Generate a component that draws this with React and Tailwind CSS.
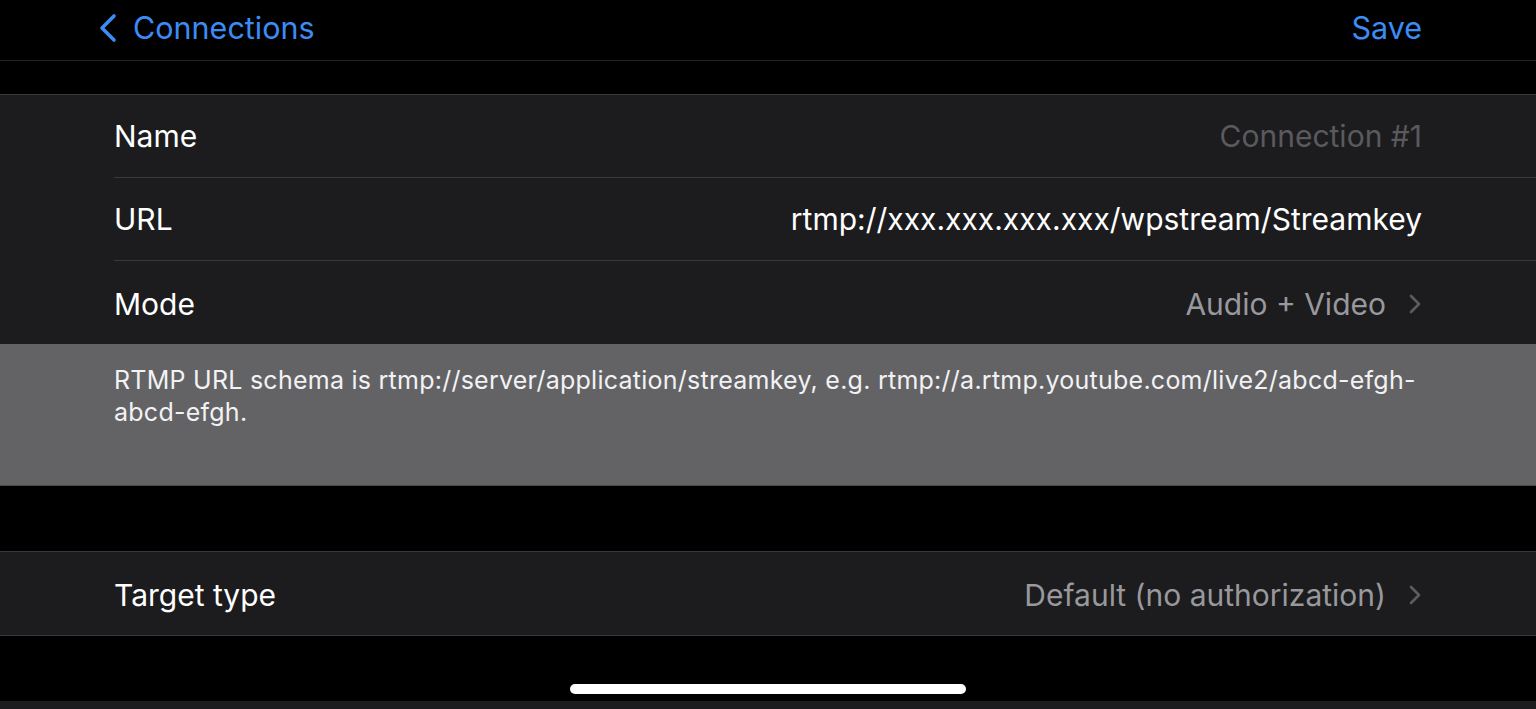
import React from "react";

const font = { fontFamily: "Inter, 'Noto Sans', sans-serif" };

function Chevron() {
  return (
    <svg width="14" height="22" viewBox="0 0 14 22" className="ml-[22px] shrink-0">
      <path d="M3 3 L11 11 L3 19" fill="none" stroke="#5c5c60" strokeWidth="2.6" strokeLinecap="round" strokeLinejoin="round" />
    </svg>
  );
}

function Row({ label, value, valueClass, chevron, separator, shift }) {
  return (
    <div className="pl-[114px] bg-[#1c1c1e]">
      <div className={`h-[83px] flex items-center justify-between pr-[114px] ${shift ? "pt-[3px]" : ""} ${separator ? "border-b border-[#38383a]" : ""}`}>
        <span className="text-[30px] text-white">{label}</span>
        <div className="flex items-center">
          <span className={`text-[30px] ${valueClass}`}>{value}</span>
          {chevron && <Chevron />}
        </div>
      </div>
    </div>
  );
}

export default function App() {
  return (
    <div className="w-[1536px] h-[709px] bg-black flex flex-col overflow-hidden" style={font}>
      <div className="h-[61px] flex items-center justify-between px-[98px] pr-[114px] pb-[4px] border-b border-[#232325]">
        <div className="flex items-center text-[#3b8cf5]">
          <svg width="20" height="30" viewBox="0 0 20 30" className="mr-[15px]">
            <path d="M16 3 L4 15 L16 27" fill="none" stroke="#3b8cf5" strokeWidth="3.6" strokeLinecap="round" strokeLinejoin="round" />
          </svg>
          <span className="text-[30.5px]">Connections</span>
        </div>
        <span className="text-[30.5px] text-[#3b8cf5]">Save</span>
      </div>
      <div className="h-[33px]" />
      <div className="border-t border-[#38383a]">
        <Row label="Name" value="Connection #1" valueClass="text-[#5a5a5e]" separator />
        <Row label="URL" value="rtmp://xxx.xxx.xxx.xxx/wpstream/Streamkey" valueClass="text-white" separator />
        <Row label="Mode" value="Audio + Video" valueClass="text-[#98989d]" chevron shift />
      </div>
      <div className="h-[142px] bg-[#636366] pl-[114px] pr-[110px] pt-[20px] border-b border-[#48484a]">
        <p className="text-[25px] leading-[32px] text-[#f2f2f4] tracking-[0.25px]">
          RTMP URL schema is rtmp://server/application/streamkey, e.g. rtmp://a.rtmp.youtube.com/live2/abcd-efgh-abcd-efgh.
        </p>
      </div>
      <div className="h-[65px]" />
      <div className="border-t border-b border-[#38383a]">
        <Row label="Target type" value="Default (no authorization)" valueClass="text-[#98989d]" chevron shift />
      </div>
      <div className="h-[65px] flex items-end justify-center pb-[7px]">
        <div className="w-[396px] h-[10px] rounded-full bg-white" />
      </div>
      <div className="flex-1 bg-[#1c1c1e]" />
    </div>
  );
}
